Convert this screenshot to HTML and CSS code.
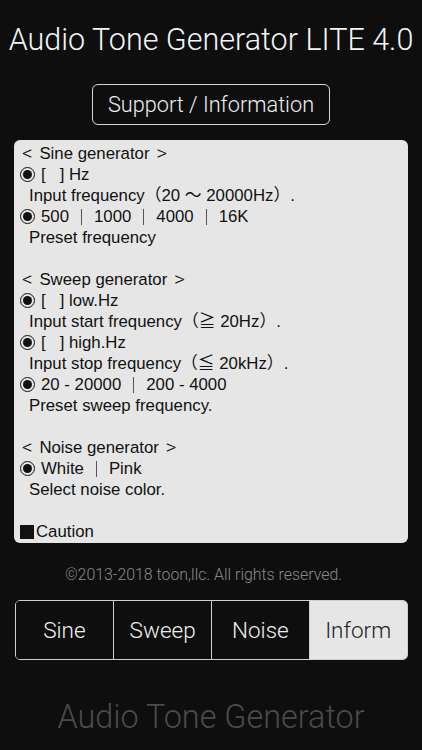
FILE: index.html
```html
<!DOCTYPE html>
<html>
<head>
<meta charset="utf-8">
<link rel="stylesheet" href="styles.css">
</head>
<body>
<div class="app">
  <h1 class="title">Audio Tone Generator LITE 4.0</h1>
  <div class="support">Support / Information</div>
  <div class="panel">
    <div class="line head"><span class="br">&lt;</span> Sine generator <span class="br">&gt;</span></div>
    <div class="line"><span class="radio"></span>[&nbsp;&nbsp;&nbsp;] Hz</div>
    <div class="line ind">Input frequency（20 〜 20000Hz）.</div>
    <div class="line"><span class="radio"></span>500<span class="sep"></span>1000<span class="sep"></span>4000<span class="sep"></span>16K</div>
    <div class="line ind">Preset frequency</div>
    <div class="line"></div>
    <div class="line head"><span class="br">&lt;</span> Sweep generator <span class="br">&gt;</span></div>
    <div class="line"><span class="radio"></span>[&nbsp;&nbsp;&nbsp;] low.Hz</div>
    <div class="line ind">Input start frequency（≧ 20Hz）.</div>
    <div class="line"><span class="radio"></span>[&nbsp;&nbsp;&nbsp;] high.Hz</div>
    <div class="line ind">Input stop frequency（≦ 20kHz）.</div>
    <div class="line"><span class="radio"></span>20 - 20000<span class="sep"></span>200 - 4000</div>
    <div class="line ind">Preset sweep frequency.</div>
    <div class="line"></div>
    <div class="line head"><span class="br">&lt;</span> Noise generator <span class="br">&gt;</span></div>
    <div class="line"><span class="radio"></span>White<span class="sep"></span>Pink</div>
    <div class="line ind">Select noise color.</div>
    <div class="line"></div>
    <div class="line head"><span class="square"></span>Caution</div>
  </div>
  <div class="copy">©2013-2018 toon,llc. All rights reserved.</div>
  <div class="tabs">
    <div class="tab">Sine</div>
    <div class="tab">Sweep</div>
    <div class="tab">Noise</div>
    <div class="tab active">Inform</div>
  </div>
  <div class="footer">Audio Tone Generator</div>
</div>
</body>
</html>
```
FILE: styles.css
```css
html, body {
  margin: 0;
  padding: 0;
  background: #0e0e0e;
}
.app {
  width: 422px;
  height: 750px;
  display: flex;
  flex-direction: column;
  align-items: center;
  font-family: "Liberation Sans", "Noto Sans CJK JP", sans-serif;
  color: #f2f2f2;
}
.title {
  margin: 23px 0 0;
  height: 34px;
  line-height: 34px;
  font-size: 30.5px;
  font-weight: 300;
  font-family: Roboto, "Liberation Sans", sans-serif;
  color: #f4f4f4;
  white-space: nowrap;
}
.support {
  margin-top: 27px;
  width: 236px;
  height: 39px;
  border: 1px solid #d8d8d8;
  border-radius: 6px;
  display: flex;
  align-items: center;
  justify-content: center;
  font-family: Roboto, "Liberation Sans", sans-serif;
  font-weight: 300;
  font-size: 21.7px;
  color: #f0f0f0;
}
.panel {
  margin-top: 15px;
  width: 394px;
  height: 403px;
  box-sizing: border-box;
  padding: 3px 0 0 6px;
  background: #e6e6e6;
  border-radius: 6px;
  color: #111;
  font-size: 16.8px;
  overflow: hidden;
}
.line {
  height: 21px;
  line-height: 21px;
  white-space: pre;
  display: flex;
  align-items: center;
}
.br {
  font-size: 21px;
  font-family: Roboto, "Liberation Sans", sans-serif;
  font-weight: 300;
  line-height: 21px;
  margin: 0 2px;
}
.ind {
  padding-left: 9px;
}
.radio {
  width: 13px;
  height: 13px;
  border: 1.5px solid #111;
  border-radius: 50%;
  margin-right: 6px;
  position: relative;
  flex: none;
  box-sizing: content-box;
  background: #e6e6e6;
}
.radio::after {
  content: "";
  position: absolute;
  left: 2px;
  top: 2px;
  width: 9px;
  height: 9px;
  border-radius: 50%;
  background: #111;
}
.sep {
  flex: none;
  width: 1px;
  height: 16px;
  background: #555;
  margin: 1px 12px 0;
}
.square {
  width: 14px;
  height: 14px;
  background: #111;
  margin-right: 2px;
  flex: none;
}
.copy {
  margin-top: 22px;
  margin-right: 15px;
  height: 20px;
  line-height: 20px;
  font-size: 15.9px;
  font-family: Roboto, "Liberation Sans", sans-serif;
  font-weight: 300;
  color: #8a8a8a;
}
.tabs {
  margin-top: 15px;
  width: 393px;
  height: 60px;
  box-sizing: border-box;
  border: 1px solid #cfcfcf;
  border-radius: 5px;
  overflow: hidden;
  display: grid;
  grid-template-columns: 1fr 1fr 1fr 1fr;
}
.tab {
  display: flex;
  align-items: center;
  justify-content: center;
  font-size: 22.5px;
  font-family: Roboto, "Liberation Sans", sans-serif;
  font-weight: 300;
  color: #f0f0f0;
  background: #0e0e0e;
  border-left: 1px solid #cfcfcf;
}
.tab:first-child {
  border-left: none;
}
.tab.active {
  background: #e6e6e6;
  color: #222;
}
.footer {
  margin-top: 37px;
  height: 40px;
  line-height: 40px;
  font-size: 32.4px;
  font-family: Roboto, "Liberation Sans", sans-serif;
  font-weight: 300;
  color: #4a4a4a;
}
```
